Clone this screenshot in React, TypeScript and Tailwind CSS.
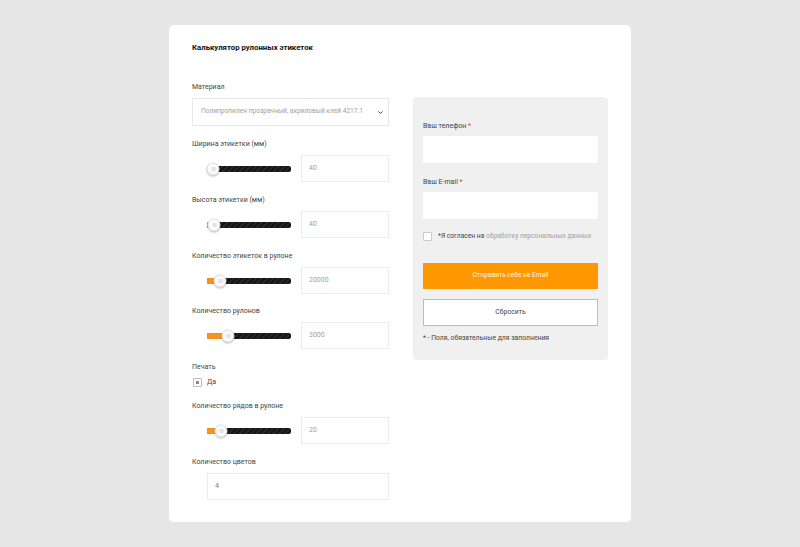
const font = { fontFamily: "Roboto, 'Noto Sans', sans-serif" };

const Slider = ({ pos, value }: { pos: number; value: string }) => (
  <div className="flex items-center pl-[15px]">
    <div className="relative h-[6px] w-[84px] rounded-[2px] bg-[repeating-linear-gradient(135deg,#161616_0px,#161616_2px,#262626_2px,#262626_4px)]">
      <div className="absolute left-0 top-0 h-[6px] rounded-l-[2px] bg-[#f7921e]" style={{ width: pos }} />
      <div
        className="absolute top-1/2 flex h-[13px] w-[13px] -translate-x-1/2 -translate-y-1/2 items-center justify-center rounded-full border border-[#e2e2e2] bg-[#fafafa] shadow-[0_1px_2px_rgba(0,0,0,0.25)]"
        style={{ left: pos }}
      >
        <div className="flex flex-col gap-[1px]">
          <div className="h-px w-[4px] bg-[#ccc]" />
          <div className="h-px w-[4px] bg-[#ccc]" />
        </div>
      </div>
    </div>
    <div className="ml-[10px] flex h-[27px] w-[88px] items-center border border-[#ebebeb] bg-white pl-[7px] text-[7px] text-[#a0a0a0]">
      {value}
    </div>
  </div>
);

const Label = ({ children }: { children: React.ReactNode }) => (
  <div className="mb-[6px] h-[10px] whitespace-nowrap text-[7px] leading-[10px] text-[#444]">{children}</div>
);

export default function App() {
  return (
    <div className="min-h-[547px] w-full bg-[#e6e6e6] pt-[25px]" style={font}>
      <div className="mx-auto flex w-[462px] gap-[24px] rounded-[5px] bg-white px-[23px] pb-[22px] pt-[18px]">
        <div className="w-[197px]">
          <div className="h-[10px] whitespace-nowrap text-[7.8px] font-bold leading-[10px] text-[#111]">
            Калькулятор рулонных этикеток
          </div>

          <div className="mt-[29px]">
            <Label>Материал</Label>
            <div className="flex h-[28px] items-center justify-between border border-[#e8e8e8] bg-white pl-[8px] pr-[4px] text-[6.6px] text-[#a0a0a0]">
              <span className="whitespace-nowrap">Полипропилен прозрачный, акриловый клей 4217.1</span>
              <svg width="7" height="7" viewBox="0 0 10 10" fill="none">
                <path d="M2 3.5 L5 6.5 L8 3.5" stroke="#444" strokeWidth="1.4" />
              </svg>
            </div>
          </div>

          <div className="mt-[13px]">
            <Label>Ширина этикетки (мм)</Label>
            <Slider pos={6} value="40" />
          </div>
          <div className="mt-[13px]">
            <Label>Высота этикетки (мм)</Label>
            <Slider pos={7} value="40" />
          </div>
          <div className="mt-[13px]">
            <Label>Количество этикеток в рулоне</Label>
            <Slider pos={13} value="20000" />
          </div>
          <div className="mt-[12px]">
            <Label>Количество рулонов</Label>
            <Slider pos={21} value="3000" />
          </div>

          <div className="mt-[13px]">
            <div className="mb-[5px] h-[10px] text-[7px] leading-[10px] text-[#444]">Печать</div>
            <div className="flex h-[10px] items-center gap-[5px] pl-[1px] text-[7px] text-[#444]">
              <div className="flex h-[9px] w-[9px] items-center justify-center rounded-[1px] border border-[#bbb] bg-white">
                <div className="h-[3px] w-[3px] bg-[#888]" />
              </div>
              <span>Да</span>
            </div>
          </div>

          <div className="mt-[14px]">
            <Label>Количество рядов в рулоне</Label>
            <Slider pos={14} value="20" />
          </div>

          <div className="mt-[13px]">
            <Label>Количество цветов</Label>
            <div className="ml-[15px] flex h-[27px] items-center border border-[#ebebeb] bg-white pl-[7px] text-[7px] text-[#777]">
              4
            </div>
          </div>
        </div>

        <div className="mt-[54px] h-[263px] w-[196px] rounded-[4px] bg-[#f0f0f0] px-[10px] pt-[24px]">
          <div className="mb-[5px] h-[10px] whitespace-nowrap text-[7px] leading-[10px] text-[#444]">
            Ваш телефон <span className="text-[#e53935]">*</span>
          </div>
          <div className="h-[27px] bg-white" />
          <div className="mb-[5px] mt-[14px] h-[10px] whitespace-nowrap text-[7px] leading-[10px] text-[#444]">
            Ваш E-mail <span className="text-[#e53935]">*</span>
          </div>
          <div className="h-[27px] bg-white" />
          <div className="mt-[12px] flex h-[10px] items-center gap-[6px] whitespace-nowrap text-[6.7px]">
            <div className="h-[9px] w-[9px] shrink-0 rounded-[1px] border border-[#ccc] bg-white" />
            <span className="text-[#444]">
              *Я согласен на <span className="text-[#a0a0a0]">обработку персональных данных</span>
            </span>
          </div>
          <div className="mt-[22px] flex h-[26px] items-center justify-center bg-[#ff9800] text-[6.6px] text-[#fff4e0]">
            Отправить себе на Email
          </div>
          <div className="mt-[10px] flex h-[27px] items-center justify-center border border-[#bdbdbd] bg-white text-[6.8px] text-[#444]">
            Сбросить
          </div>
          <div className="mt-[7px] h-[10px] whitespace-nowrap text-[6.8px] leading-[10px] text-[#444]">
            * - Поля, обязательные для заполнения
          </div>
        </div>
      </div>
    </div>
  );
}
